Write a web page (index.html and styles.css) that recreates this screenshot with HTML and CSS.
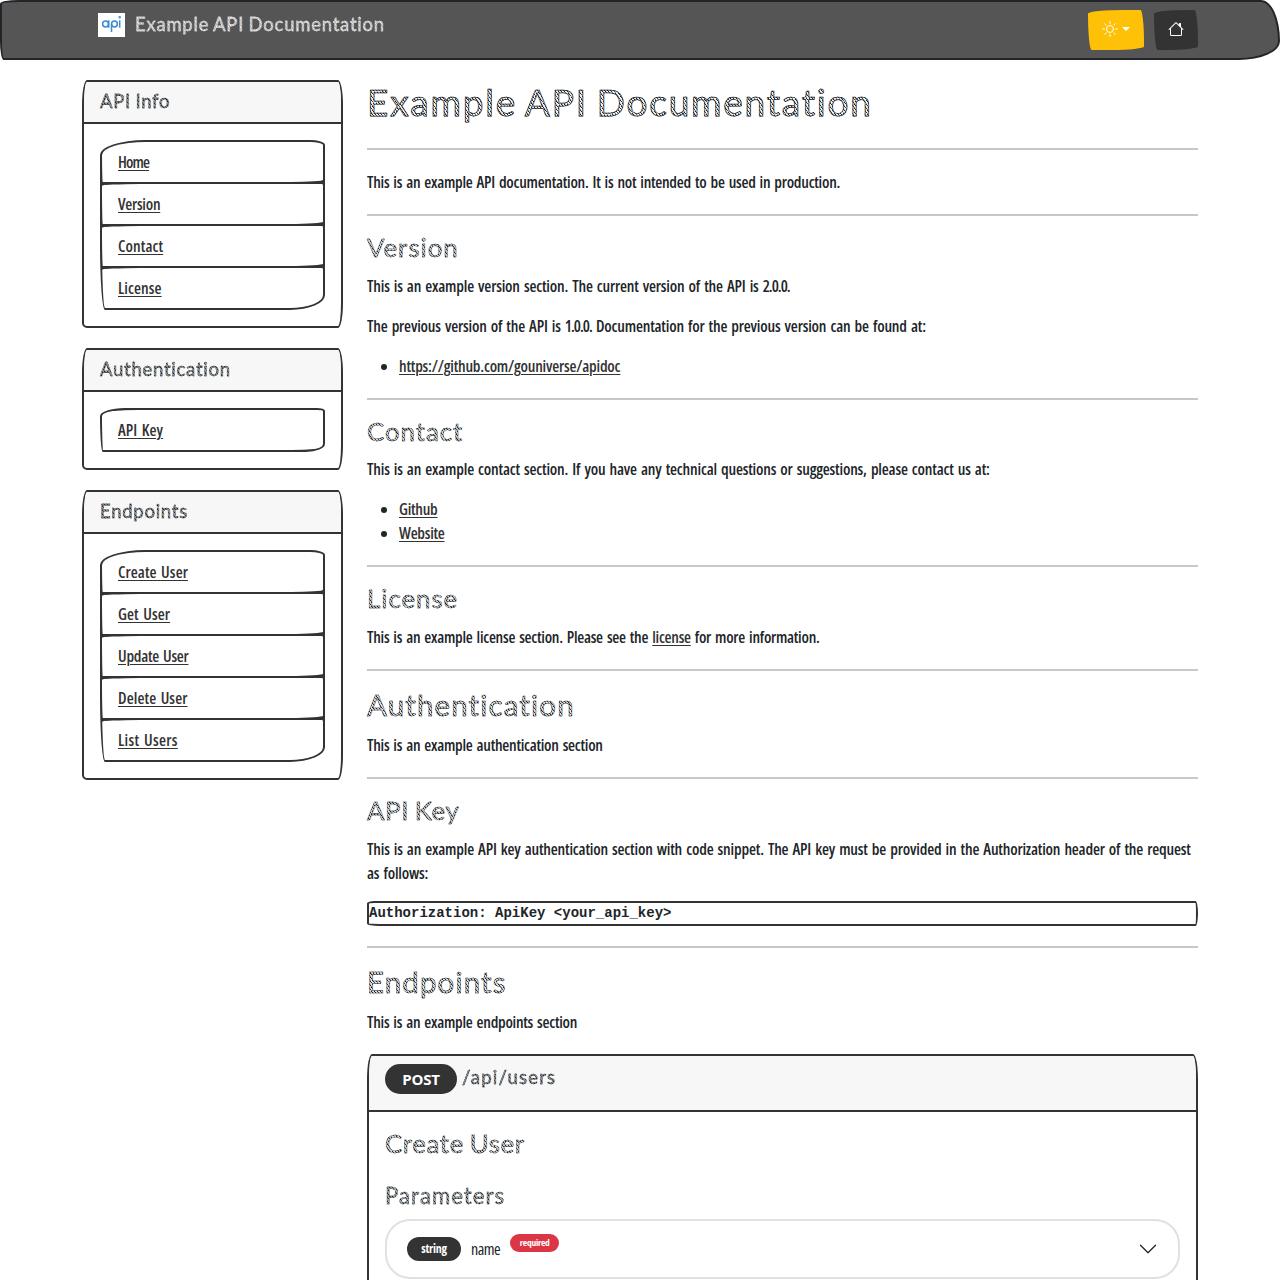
FILE: index.html
```html
<!DOCTYPE html>
<html lang="en">
<head>
<meta charset="utf-8">
<title>Example API Documentation</title>
<link rel="stylesheet" href="styles.css">
</head>
<body>
<nav class="navbar">
  <a class="brand" href="#">
    <svg class="logo" viewBox="0 0 27 24" width="27" height="24" fill="none" stroke="#3c8bd0" stroke-width="1.5"><rect width="27" height="24" fill="#fff" stroke="none"/><circle cx="7.5" cy="11" r="2.9"/><path d="M10.7 7.3v7.4M13.5 19v-8"/><circle cx="16.5" cy="11" r="2.9"/><path d="M21.7 7.3v7.4"/><circle cx="21.7" cy="4.2" r=".5"/></svg>
    <span class="sketch light">Example API Documentation</span>
  </a>
  <div class="tools">
    <button class="btn warning" aria-label="Theme">
      <svg width="16" height="16" viewBox="0 0 16 16" fill="none" stroke="currentColor" stroke-linecap="round"><circle cx="8" cy="8" r="3.5"/><path d="M8 .5v2M8 13.5v2M.5 8h2M13.5 8h2M2.7 2.7l1.4 1.4M11.9 11.9l1.4 1.4M2.7 13.3l1.4-1.4M11.9 4.1l1.4-1.4"/></svg>
      <span class="caret"></span>
    </button>
    <button class="btn dark" aria-label="Home">
      <svg width="16" height="16" viewBox="0 0 16 16" fill="currentColor"><path d="M8.707 1.5a1 1 0 0 0-1.414 0L.646 8.146a.5.5 0 0 0 .708.708L2 8.207V13.5A1.5 1.5 0 0 0 3.5 15h9a1.5 1.5 0 0 0 1.5-1.5V8.207l.646.647a.5.5 0 0 0 .708-.708L13 5.793V2.5a.5.5 0 0 0-.5-.5h-1a.5.5 0 0 0-.5.5v1.293L8.707 1.5ZM13 7.207V13.5a.5.5 0 0 1-.5.5h-9a.5.5 0 0 1-.5-.5V7.207l5-5 5 5Z"/></svg>
    </button>
  </div>
</nav>
<div class="page">
  <aside class="sidebar">
    <section class="card">
      <header class="card-header"><h5 class="sketch">API Info</h5></header>
      <ul class="list">
        <li><a class="tight" href="#">Home</a></li><li><a href="#">Version</a></li><li><a class="loose" href="#">Contact</a></li><li><a class="loose" href="#">License</a></li>
      </ul>
    </section>
    <section class="card">
      <header class="card-header"><h5 class="sketch">Authentication</h5></header>
      <ul class="list"><li><a class="loose" href="#">API Key</a></li></ul>
    </section>
    <section class="card">
      <header class="card-header"><h5 class="sketch">Endpoints</h5></header>
      <ul class="list">
        <li><a class="loose" href="#">Create User</a></li><li><a class="loose" href="#">Get User</a></li><li><a href="#">Update User</a></li><li><a class="loose" href="#">Delete User</a></li><li><a class="looser" href="#">List Users</a></li>
      </ul>
    </section>
  </aside>
  <main class="content">
    <h1 class="sketch">Example API Documentation</h1>
    <hr class="first">
    <p>This is an example API documentation. It is not intended to be used in production.</p>
    <hr>
    <h3 class="sketch">Version</h3>
    <p class="wide">This is an example version section. The current version of the API is <span class="num">2.0.0.</span></p>
    <p class="wide">The previous version of the API is <span class="num">1.0.0.</span> Documentation for the previous version can be found at:</p>
    <ul class="links"><li><a class="url" href="#">https://github.com/gouniverse/apidoc</a></li></ul>
    <hr>
    <h3 class="sketch">Contact</h3>
    <p class="wide">This is an example contact section. If you have any technical questions or suggestions, please contact us at:</p>
    <ul class="links"><li><a href="#">Github</a></li><li><a href="#">Website</a></li></ul>
    <hr>
    <h3 class="sketch">License</h3>
    <p>This is an example license section. Please see the <a href="#">license</a> for more information.</p>
    <hr>
    <h2 class="sketch">Authentication</h2>
    <p>This is an example authentication section</p>
    <hr>
    <h3 class="sketch snug">API Key</h3>
    <p class="wide">This is an example API key authentication section with code snippet. The API key must be provided in the Authorization header of the request<br>as follows:</p>
    <pre>Authorization: ApiKey &lt;your_api_key&gt;</pre>
    <hr>
    <h2 class="sketch">Endpoints</h2>
    <p>This is an example endpoints section</p>
    <section class="card endpoint">
      <header class="card-header"><span class="badge method">POST</span><h5 class="sketch path">/api/users</h5></header>
      <div class="card-body">
        <h3 class="sketch snug">Create User</h3>
        <h4 class="sketch">Parameters</h4>
        <div class="param">
          <span class="badge type">string</span>
          <span class="name">name</span>
          <span class="badge required">required</span>
          <svg class="chevron" width="20" height="20" viewBox="0 0 16 16" fill="none" stroke="#212529" stroke-linecap="round" stroke-linejoin="round"><path d="M2 5l6 6 6-6"/></svg>
        </div>
      </div>
    </section>
  </main>
</div>
</body>
</html>
```
FILE: styles.css
```css
* { box-sizing: border-box; }
body {
  margin: 0;
  height: 1280px;
  overflow: hidden;
  background: #fff;
  color: #212529;
  font: 600 16px/24px "Open Sans", sans-serif;
  font-stretch: 75%;
  letter-spacing: -0.26px;
  word-spacing: 1.4px;
}
h1, h2, h3, h4, h5, p, ul, pre { margin: 0; }
a { color: #333; text-underline-offset: 2px; text-decoration-thickness: 1px; }
.wide { letter-spacing: -0.18px; }
.tight { letter-spacing: -0.9px; }
.loose { letter-spacing: .1px; }
.looser { letter-spacing: .33px; }
.num { letter-spacing: -1px; }
.url { letter-spacing: -0.2px; }

/* Hatched, outlined lettering */
.sketch {
  --ink: #212529;
  --paper: #d4d7d9;
  font-family: Lato, sans-serif;
  font-stretch: normal;
  font-weight: 400;
  letter-spacing: .045em;
  word-spacing: -.06em;
  width: fit-content;
  color: transparent;
  background: repeating-linear-gradient(55deg, var(--ink) 0 .4px, var(--paper) 1px 2.4px);
  -webkit-background-clip: text;
  background-clip: text;
  -webkit-text-stroke: .4px var(--ink);
}
h1 { font-size: 37px; line-height: 44px; padding-bottom: 4px; }
h2 { font-size: 29.4px; line-height: 36.4px; padding-bottom: 2px; }
h3 { font-size: 25.8px; line-height: 31.6px; padding-bottom: 2px; }
h4 { font-size: 22.2px; line-height: 27.8px; padding-bottom: 1px; }
h5 { font-size: 18.5px; line-height: 22px; padding-bottom: 2px; }
h1.sketch { --paper: #f2f3f4; letter-spacing: .048em; -webkit-text-stroke-width: .75px; }
h2.sketch { --paper: #e4e6e8; letter-spacing: .04em; -webkit-text-stroke-width: .5px; }
h3.sketch { letter-spacing: .038em; }
h3.snug { letter-spacing: .025em; }
h4.sketch, h5.sketch, .light { -webkit-text-stroke-width: .3px; }
h4.sketch { --paper: #a8acaf; }
h5.sketch { --paper: #94989b; letter-spacing: .04em; }
h5.path { letter-spacing: .065em; }
.light { --ink: #eee; --paper: #b5b5b5; height: 24px; font-size: 18.4px; line-height: 24px; }

.navbar {
  height: 60px;
  padding: 8px 80px 8px 96px;
  display: flex;
  justify-content: space-between;
  align-items: flex-start;
  background: #555;
  border: 2px solid #212529;
  border-radius: 25px 25px 55px 5px / 5px 55px 25px 25px;
}
.brand { display: flex; gap: 10px; text-decoration: none; padding-top: 2px; }
.logo { margin-top: 1px; }
.tools { display: flex; gap: 10px; }
.btn {
  height: 40px;
  padding: 0 14px;
  border: 0;
  display: flex;
  align-items: center;
  gap: 4px;
  color: #fff;
  border-radius: 255px 25px 225px 25px / 25px 225px 25px 255px;
}
.warning { background: #ffc107; }
.dark { background: #333; }
.btn svg { margin-bottom: 2px; }
.caret { margin-bottom: 3px; border: 4px solid transparent; border-top-color: #fff; border-bottom: 0; }

.page {
  width: 1116px;
  margin: 20px auto 0;
  display: grid;
  grid-template-columns: 261px 831px;
  gap: 24px;
  align-items: start;
}
.sidebar { display: grid; gap: 20px; }
.card {
  border: 2px solid #333;
  border-radius: 5px / 25px 25px 25px 5px;
  overflow: hidden;
}
.card-header { padding: 8px 16px; background: #f7f7f7; border-bottom: 2px solid #333; }
.list {
  margin: 16px;
  padding: 0;
  list-style: none;
  background: #333;
  border: 2px solid #333;
  border-radius: 45px 15px 35px 5px / 15px 5px 15px 65px;
  overflow: hidden;
}
.list li { padding: 8px 16px; background: #fff; border-radius: 255px 5px 225px 5px / 25px 25px 15px 255px; }
.list li + li { border-top: 2px solid #333; }

hr { height: 2px; margin: 20px 0 16px; border: 0; background: #c8c8c9; }
hr.first { margin-bottom: 20px; }
.content h2, .content h3 { margin-bottom: 8px; }
p + p, p + ul, p + pre { margin-top: 16px; }
.links { padding-left: 32px; }
pre {
  border: 2px solid #333;
  border-radius: 15px 5px 5px 25px / 5px 25px 25px 5px;
  font: 700 14px/21px "Liberation Mono", monospace;
  letter-spacing: 0;
  word-spacing: 0;
}

/* The first endpoint card continues below the fold */
.endpoint { margin-top: 20px; height: 226px; border-bottom: 0; border-radius: 5px 5px 0 0 / 25px 25px 0 0; }
.endpoint .card-header { height: 56px; display: flex; gap: 5px; }
.endpoint .sketch { margin-top: 2px; }
.card-body { padding: 16px 16px 0; }
.card-body h3.sketch { margin: 0 0 20px; }
.card-body h4.sketch { margin: 0 0 8px; }
.badge { color: #fff; background: #333; border-radius: 50px; text-align: center; font-weight: 700; }
.method { width: 72px; height: 30px; font-size: 15px; line-height: 30px; letter-spacing: -.2px; font-stretch: 90%; }
.param {
  height: 60px;
  padding: 0 20px;
  display: flex;
  align-items: center;
  border: 2px solid #dee2e6;
  border-radius: 25px;
}
.type { width: 54px; height: 24px; font-size: 12px; line-height: 24px; }
.name { margin: 0 10px; font-weight: 400; letter-spacing: -.5px; }
.required { width: 49px; height: 18px; margin-bottom: 12px; background: #dc3545; font-size: 9.5px; line-height: 17px; }
.chevron { margin-left: auto; }
```
